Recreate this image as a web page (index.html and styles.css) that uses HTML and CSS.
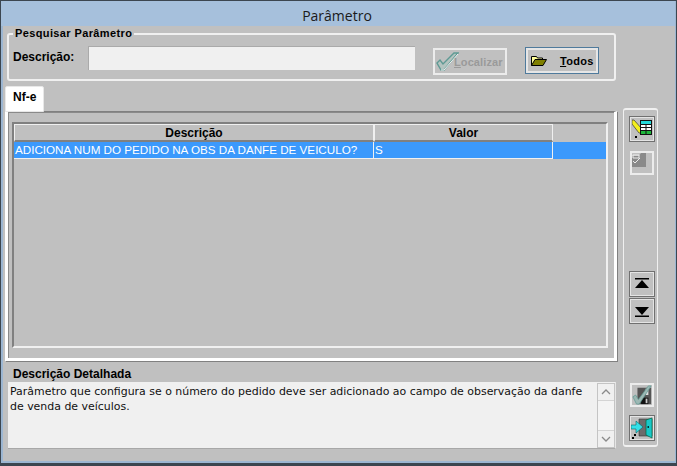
FILE: index.html
```html
<!DOCTYPE html>
<html lang="pt">
<head>
<meta charset="utf-8">
<title>Parâmetro</title>
<link rel="stylesheet" href="styles.css">
</head>
<body>
<div class="window">
  <div class="title">Parâmetro</div>
  <div class="content">
    <div class="main">
      <fieldset class="search">
        <legend>Pesquisar Parâmetro</legend>
        <span class="search-label">Descrição:</span>
        <div class="search-input"></div>
        <div class="btn btn-off">
          <svg class="btn-check" width="23" height="19" viewBox="0 0 23 19"><path d="M1 11l3-3 3 4L18 1h4L8 18H5z" fill="#b4c4c0" stroke="#5f9a94" stroke-width="1.400"/><path d="M5 18h3L22 2" fill="none" stroke="#f2f2f2" stroke-width="1"/></svg>
          <span class="btn-off-text"><u>L</u>ocalizar</span>
        </div>
        <div class="btn btn-on">
          <svg width="16" height="11" viewBox="0 0 16 11"><path d="M0.5 10.5V1.5h5l1 1.500h5v2" fill="#ffff99" stroke="#000"/><path d="M0.500 10.500L4 4.500h11.500l-3.500 6z" fill="#808000" stroke="#000"/></svg>
          <span class="btn-on-text"><u>T</u>odos</span>
        </div>
      </fieldset>
      <div class="tabs"><div class="tab">Nf-e</div></div>
      <div class="panel">
        <div class="grid">
          <div class="grid-head">
            <div class="cell col-desc">Descrição</div>
            <div class="cell col-val">Valor</div>
          </div>
          <div class="grid-row">
            <div class="rcell col-desc">ADICIONA NUM DO PEDIDO NA OBS DA DANFE DE VEICULO?</div>
            <div class="rcell col-val">S</div>
          </div>
        </div>
      </div>
      <div class="detail-label">Descrição Detalhada</div>
      <div class="detail">
        <div class="detail-text">Parâmetro que configura se o número do pedido deve ser adicionado ao campo de observação da danfe de venda de veículos.</div>
        <div class="scroll">
          <div class="scroll-btn"><svg width="10" height="6" viewBox="0 0 10 6"><path d="M1 5l4-4 4 4" fill="none" stroke="#8a8a8a" stroke-width="1.300"/></svg></div>
          <div class="scroll-track"></div>
          <div class="scroll-btn"><svg width="10" height="6" viewBox="0 0 10 6"><path d="M1 1l4 4 4-4" fill="none" stroke="#8a8a8a" stroke-width="1.300"/></svg></div>
        </div>
      </div>
    </div>
    <div class="side">
      <div class="tool tool-dark tool-first">
        <svg width="20" height="20" viewBox="0 0 20 20"><path d="M0 1h2l8 9v4H7L0 5z" fill="#f4f01e" stroke="#333" stroke-width=".7"/><rect x="8" y="1" width="12" height="15" fill="#111"/><rect x="9" y="2" width="10" height="3" fill="#22d8d8"/><path d="M9 6h4.500v2H9zM14.500 6H19v2h-4.500zM9 9h4.500v2H9zM14.500 9H19v2h-4.500z" fill="#fff"/><path d="M9 12h4.500v3H9zM14.500 12H19v3h-4.500z" fill="#1fb83c"/><rect x="3" y="17" width="2" height="2" fill="#000"/></svg>
      </div>
      <div class="tool tool-light tool-print">
        <svg width="14" height="14" viewBox="0 0 14 14"><path d="M0 3h7l2-3h5v14H0z" fill="#8a8a8a"/><path d="M1 2h6v3H1zM1 8l2 2 5-5" fill="none" stroke="#ececec"/></svg>
      </div>
      <div class="tool tool-dark tool-up">
        <svg width="16" height="12" viewBox="0 0 16 12"><path d="M1 0h14v1.500H1zM8 2l7 8H1z"/></svg>
      </div>
      <div class="tool tool-dark tool-down">
        <svg width="16" height="12" viewBox="0 0 16 12"><path d="M1 2h14l-7 8zM1 10.500h14V12H1z"/></svg>
      </div>
      <div class="tool tool-light tool-save">
        <svg width="20" height="20" viewBox="0 0 22 22"><path d="M6 3h15v18H6z" fill="#555"/><rect x="10" y="14" width="8" height="7" fill="#111"/><rect x="15" y="15" width="2" height="5" fill="#ccc"/><rect x="15" y="4" width="3" height="7" fill="#ddd"/><path d="M1 13l3-2 3 5L18 1h3L8 21H5z" fill="#9db8b4" stroke="#5f9a94" stroke-width=".8"/></svg>
      </div>
      <div class="tool tool-dark tool-exit">
        <svg width="22" height="22" viewBox="0 0 22 22"><path d="M8 2h13v17H8z" fill="#6c6c6c" stroke="#333" stroke-width=".6"/><path d="M15 3l6-2v20l-6-3z" fill="#18c8c8" stroke="#064" stroke-width=".7"/><rect x="16.500" y="9" width="1.500" height="2" fill="#033"/><path d="M0 8h5V4l7 6-7 6v-4H0z" fill="#35e0e8" stroke="#066" stroke-width=".6"/><rect x="3" y="17" width="2" height="2" fill="#000"/><rect x="1" y="20" width="2" height="2" fill="#000"/></svg>
      </div>
    </div>
  </div>
</div>
</body>
</html>
```
FILE: styles.css
```css
* { box-sizing: border-box; }
html, body { margin: 0; padding: 0; }
body { width: 677px; height: 466px; overflow: hidden; background: #3c4650; padding: 1px 1px 3px 1px; font-family: "Liberation Sans", Arial, sans-serif; color: #000; }
.window { width: 675px; height: 462px; border-left: 2px solid #9cb6d2; border-right: 1px solid #9cb6d2; border-bottom: 2px solid #9cb6d2; display: flex; flex-direction: column; background: #c0c0c0; }
.title { height: 25px; flex: none; background: #a6c0dc; margin: 0 0 0 -2px; text-align: center; font-family: "Open Sans", sans-serif; font-size: 14px; line-height: 29px; color: #1a1a1a; padding-right: 2px; }
.content { flex: 1; display: flex; min-height: 0; }
.main { width: 615px; flex: none; padding-left: 2px; display: flex; flex-direction: column; }

.search { margin: 2px 1px 0 2px; padding: 7px 0 0 0; height: 53px; border: 2px solid #f0f0f0; border-radius: 3px; display: flex; align-items: flex-start; width: 609px; }
.search legend { margin-left: 4px; padding: 0 2px; font-size: 11px; font-weight: bold; line-height: 11px; letter-spacing: .38px; }
.search-label { font-size: 12px; font-weight: bold; margin: 4px 0 0 4px; width: 75px; flex: none; line-height: 14px; }
.search-input { width: 327px; height: 24px; background: #f0f0f0; border: 1px solid #aaa; border-width: 1px 0 0 1px; flex: none; }
.btn { width: 74px; height: 27px; display: flex; align-items: center; flex: none; }
.btn-off { margin: 2px 0 0 18px; border: 2px solid #ececec; padding-left: 1px; }
.btn-on { margin: 1px 0 0 18px; border: 1px solid #4f7a9c; box-shadow: inset 0 0 0 2px #e6e6e6; padding-left: 5px; }
.btn-check { flex: none; margin-right: -5px; }
.btn-off-text { color: #9a9a9a; font-size: 11px; font-weight: bold; letter-spacing: .1px; }
.btn-on-text { font-size: 11px; font-weight: bold; margin-left: 13px; letter-spacing: .3px; }

.tabs { height: 26px; margin-top: 5px; display: flex; position: relative; z-index: 1; flex: none; }
.tab { width: 39px; height: 26px; background: #fff; border-radius: 2px 2px 0 0; border: 1px solid #e8e8e8; font-size: 12px; font-weight: bold; padding: 3px 0 0 7px; }
.panel { height: 250px; width: 612px; flex: none; margin-top: -1px; border-top: 1px solid #808080; border-right: 3px solid #fff; border-left: 3px solid #fff; border-bottom: 3px solid #fff; padding: 10px 6px 10px 4px; box-shadow: inset 1px 1px 0 #8a8a8a, 1px 1px 0 #808080; }
.grid { height: 100%; border-top: 2px solid #808080; border-left: 2px solid #808080; border-bottom: 2px solid #f0f0f0; border-right: 2px solid #f0f0f0; background: #c0c0c0; }
.grid-head { display: flex; height: 18px; }
.cell { text-align: center; font-size: 12px; font-weight: bold; line-height: 16px; border: 1px solid #f0f0f0; border-width: 1px 1px 2px 1px; border-bottom-color: #808080; }
.grid-row { display: flex; height: 17px; background: #3b99fc; }
.rcell { color: #fff; font-size: 11.650px; line-height: 15px; padding-left: 1px; border-right: 1px solid #f0f0f0; border-bottom: 1px solid #f0f0f0; white-space: nowrap; overflow: hidden; }
.col-desc { width: 360px; flex: none; }
.col-val { width: 179px; flex: none; }

.detail-label { font-size: 12px; font-weight: bold; margin: 6px 0 0 8px; line-height: 14px; height: 14px; flex: none; }
.detail { margin: 1px 0 0 3px; width: 608px; height: 67px; background: #f0f0f0; display: flex; flex: none; border-bottom: 1px solid #a8a8a8; border-right: 1px solid #e6e6e6; }
.detail-text { flex: 1; font-family: "DejaVu Sans", sans-serif; font-size: 10.950px; line-height: 15px; padding: 2px 2px 0 2px; color: #111; }
.scroll { width: 18px; flex: none; display: flex; flex-direction: column; border: 1px solid #c4c4c4; margin-top: 1px; }
.scroll-btn { height: 17px; display: flex; align-items: center; justify-content: center; border-bottom: 1px solid #d4d4d4; flex: none; }
.scroll-btn:last-child { border-bottom: 0; border-top: 1px solid #d4d4d4; }
.scroll-track { flex: 1; background: #f4f4f4; }

.side { width: 35px; height: 339px; margin: 82px 0 0 5px; border: 2px solid #f0f0f0; border-left-width: 1px; border-right-width: 1px; border-radius: 3px; display: flex; flex-direction: column; align-items: flex-start; padding: 6px 0 0 5px; flex: none; }
.tool { width: 26px; height: 26px; display: flex; align-items: center; justify-content: center; flex: none; }
.tool-dark { border: 1px solid #707070; box-shadow: inset 0 0 0 1px #e4e4e4; }
.tool-light { border: 2px solid #ececec; width: 24px; height: 24px; margin-left: 1px; }
.tool-print { margin-top: 9px; justify-content: flex-start; align-items: flex-start; }
.tool-up { margin-top: 96px; }
.tool-down { margin-top: 1px; }
.tool-save { margin-top: 59px; }
.tool-exit { margin-top: 8px; }
```
